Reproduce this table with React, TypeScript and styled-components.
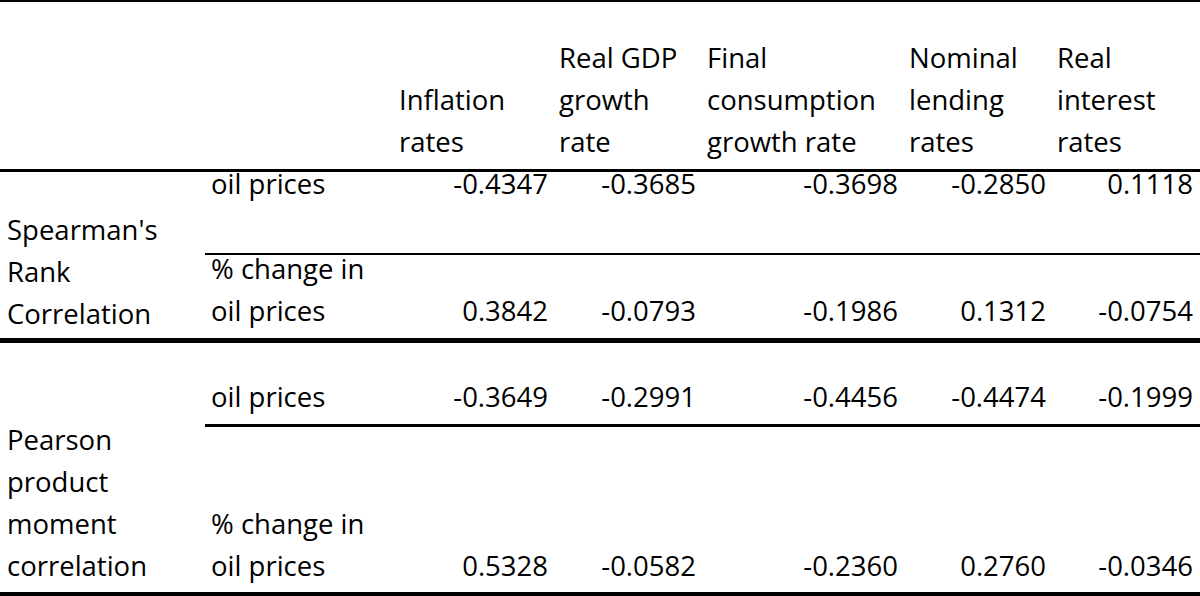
import React from 'react';
import styled, { createGlobalStyle } from 'styled-components';

const COLS = '205px 190px 160px 148px 202px 148px 1fr';

const GlobalStyle = createGlobalStyle`
  html, body {
    margin: 0;
    padding: 0;
    background: #ffffff;
  }
`;

const Sheet = styled.div`
  width: 1200px;
  height: 596px;
  box-sizing: border-box;
  border-top: 2px solid #000;
  border-bottom: 4px solid #000;
  display: flex;
  flex-direction: column;
  font-family: 'Open Sans', Lato, sans-serif;
  font-size: 27.5px;
  line-height: 42px;
  color: #000;
  background: #fff;
`;

const HeaderRow = styled.div`
  display: grid;
  grid-template-columns: ${COLS};
  height: 170px;
  box-sizing: border-box;
  border-bottom: 3px solid #000;
`;

const HeadCell = styled.div`
  align-self: end;
  padding: 0 0 6px 4px;
  white-space: nowrap;
`;

const Section = styled.div<{ $rows: string; $rule: number }>`
  display: grid;
  grid-template-columns: ${COLS};
  grid-template-rows: ${p => p.$rows};
  border-bottom: ${p => p.$rule}px solid #000;
`;

const GroupLabel = styled.div<{ $pb: number }>`
  grid-column: 1;
  grid-row: 1 / span 2;
  align-self: end;
  padding: 0 0 ${p => p.$pb}px 7px;
  white-space: nowrap;
`;

const Cell = styled.div<{ $num?: boolean; $pb: number; $rule?: number }>`
  display: flex;
  align-items: flex-end;
  justify-content: ${p => (p.$num ? 'flex-end' : 'flex-start')};
  box-sizing: border-box;
  padding: 0 ${p => (p.$num ? '7px' : '0')} ${p => p.$pb}px
    ${p => (p.$num ? '0' : '6px')};
  border-bottom: ${p => (p.$rule ? `${p.$rule}px solid #000` : 'none')};
  white-space: nowrap;
`;

const Lines = styled.span`
  display: block;
`;

const headers = [
  ['Inflation', 'rates'],
  ['Real GDP', 'growth', 'rate'],
  ['Final', 'consumption', 'growth rate'],
  ['Nominal', 'lending', 'rates'],
  ['Real', 'interest', 'rates'],
];

interface RowData {
  label: string[];
  values: string[];
  pb: number;
  rule?: number;
}

interface Group {
  label: string[];
  labelPb: number;
  rows: string;
  rule: number;
  data: RowData[];
}

const groups: Group[] = [
  {
    label: ["Spearman's", 'Rank', 'Correlation'],
    labelPb: 3,
    rows: '83px 83px',
    rule: 5,
    data: [
      {
        label: ['oil prices'],
        values: ['-0.4347', '-0.3685', '-0.3698', '-0.2850', '0.1118'],
        pb: 48,
        rule: 2,
      },
      {
        label: ['% change in', 'oil prices'],
        values: ['0.3842', '-0.0793', '-0.1986', '0.1312', '-0.0754'],
        pb: 6,
      },
    ],
  },
  {
    label: ['Pearson', 'product', 'moment', 'correlation'],
    labelPb: 5,
    rows: '84px 165px',
    rule: 0,
    data: [
      {
        label: ['oil prices'],
        values: ['-0.3649', '-0.2991', '-0.4456', '-0.4474', '-0.1999'],
        pb: 6,
        rule: 3,
      },
      {
        label: ['% change in', 'oil prices'],
        values: ['0.5328', '-0.0582', '-0.2360', '0.2760', '-0.0346'],
        pb: 5,
      },
    ],
  },
];

const Multi = ({ lines }: { lines: string[] }) => (
  <Lines>
    {lines.map(l => (
      <React.Fragment key={l}>
        {l}
        <br />
      </React.Fragment>
    ))}
  </Lines>
);

const App = () => (
  <>
    <GlobalStyle />
    <Sheet>
      <HeaderRow>
        <div />
        <div />
        {headers.map(h => (
          <HeadCell key={h[0] + h[1]}>
            <Multi lines={h} />
          </HeadCell>
        ))}
      </HeaderRow>
      {groups.map(g => (
        <Section key={g.label[0]} $rows={g.rows} $rule={g.rule}>
          <GroupLabel $pb={g.labelPb}>
            <Multi lines={g.label} />
          </GroupLabel>
          {g.data.map(row => (
            <React.Fragment key={row.values[0]}>
              <Cell $pb={row.pb} $rule={row.rule}>
                <Multi lines={row.label} />
              </Cell>
              {row.values.map(v => (
                <Cell key={v} $num $pb={row.pb} $rule={row.rule}>
                  {v}
                </Cell>
              ))}
            </React.Fragment>
          ))}
        </Section>
      ))}
    </Sheet>
  </>
);

export default App;
